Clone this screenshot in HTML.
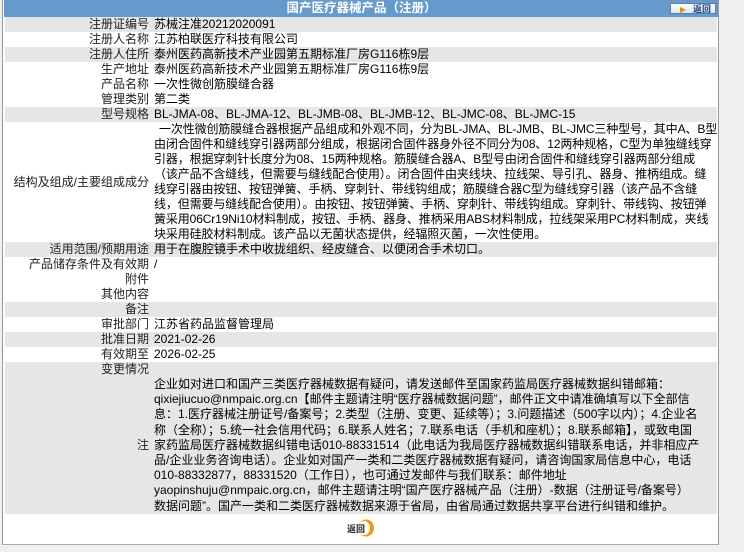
<!DOCTYPE html>
<html><head><meta charset="utf-8">
<style>
html,body{margin:0;padding:0;}
body{width:744px;height:552px;background:#f0f0f0;position:relative;overflow:hidden;font-family:"Liberation Sans","Noto Sans CJK SC",sans-serif;font-size:12px;color:#000;}
#box{position:absolute;left:2px;top:0;width:717px;height:545px;background:#fff;border-left:1px solid #999;border-right:1px solid #999;border-bottom:1px solid #aaa;box-sizing:border-box;overflow:hidden;}
#hd{position:absolute;left:1px;top:0;width:715px;height:17px;background:#6699cc;color:#fff;font-weight:bold;font-size:12.5px;line-height:17px;text-align:center;}
#ret{position:absolute;left:667px;top:3px;width:46px;height:11px;background:linear-gradient(#fff,#dde6f0);border:1px solid #5a7fae;font-size:9px;line-height:11px;color:#1a3d7a;font-weight:bold;text-align:right;padding-right:4px;box-sizing:border-box;}
#ret:before{content:"";position:absolute;left:9px;top:3px;border-left:6px solid #f08a00;border-top:3px solid transparent;border-bottom:3px solid transparent;}
table{position:absolute;left:2px;top:17px;width:712px;border-collapse:collapse;table-layout:fixed;}
td{padding:0;line-height:15px;height:15px;vertical-align:middle;white-space:nowrap;overflow:hidden;}
td.l{width:144px;text-align:right;padding-right:5px;color:#222;}
tr.g td{background:#e6e6e6;}
.s{letter-spacing:-0.12px;}
#btn{position:absolute;left:343px;top:519px;width:30px;height:18px;}
</style></head><body>
<div id="box">
<div id="hd">国产医疗器械产品（注册）</div>
<div id="ret">返回</div>
<table>
<tr class="g"><td class="l">注册证编号</td><td>苏械注准20212020091</td></tr>
<tr><td class="l">注册人名称</td><td>江苏柏联医疗科技有限公司</td></tr>
<tr class="g"><td class="l">注册人住所</td><td>泰州医药高新技术产业园第五期标准厂房G116栋9层</td></tr>
<tr><td class="l">生产地址</td><td>泰州医药高新技术产业园第五期标准厂房G116栋9层</td></tr>
<tr><td class="l">产品名称</td><td>一次性微创筋膜缝合器</td></tr>
<tr><td class="l">管理类别</td><td>第二类</td></tr>
<tr class="g"><td class="l">型号规格</td><td>BL-JMA-08、BL-JMA-12、BL-JMB-08、BL-JMB-12、BL-JMC-08、BL-JMC-15</td></tr>
<tr><td class="l">结构及组成/主要组成成分</td><td class="s"><span style="padding-left:5px"></span>一次性微创筋膜缝合器根据产品组成和外观不同，分为BL-JMA、BL-JMB、BL-JMC三种型号，其中A、B型<br>由闭合固件和缝线穿引器两部分组成，根据闭合固件器身外径不同分为08、12两种规格，C型为单独缝线穿<br>引器，根据穿刺针长度分为08、15两种规格。筋膜缝合器A、B型号由闭合固件和缝线穿引器两部分组成<br>（该产品不含缝线，但需要与缝线配合使用）。闭合固件由夹线块、拉线架、导引孔、器身、推柄组成。缝<br>线穿引器由按钮、按钮弹簧、手柄、穿刺针、带线钩组成；筋膜缝合器C型为缝线穿引器（该产品不含缝<br>线，但需要与缝线配合使用）。由按钮、按钮弹簧、手柄、穿刺针、带线钩组成。穿刺针、带线钩、按钮弹<br>簧采用06Cr19Ni10材料制成，按钮、手柄、器身、推柄采用ABS材料制成，拉线架采用PC材料制成，夹线<br>块采用硅胶材料制成。该产品以无菌状态提供，经辐照灭菌，一次性使用。</td></tr>
<tr class="g"><td class="l">适用范围/预期用途</td><td>用于在腹腔镜手术中收拢组织、经皮缝合、以便闭合手术切口。</td></tr>
<tr><td class="l">产品储存条件及有效期</td><td>/</td></tr>
<tr><td class="l">附件</td><td></td></tr>
<tr><td class="l">其他内容</td><td></td></tr>
<tr class="g"><td class="l">备注</td><td></td></tr>
<tr><td class="l">审批部门</td><td>江苏省药品监督管理局</td></tr>
<tr class="g"><td class="l">批准日期</td><td>2021-02-26</td></tr>
<tr><td class="l">有效期至</td><td>2026-02-25</td></tr>
<tr class="g"><td class="l">变更情况</td><td></td></tr>
<tr class="g"><td class="l">注</td><td style="line-height:15.2px">企业如对进口和国产三类医疗器械数据有疑问，请发送邮件至国家药监局医疗器械数据纠错邮箱：<br>qixiejiucuo@nmpaic.org.cn【邮件主题请注明“医疗器械数据问题”，邮件正文中请准确填写以下全部信<br>息：1.医疗器械注册证号/备案号；2.类型（注册、变更、延续等）；3.问题描述（500字以内）；4.企业名<br>称（全称）；5.统一社会信用代码；6.联系人姓名；7.联系电话（手机和座机）；8.联系邮箱】，或致电国<br>家药监局医疗器械数据纠错电话010-88331514（此电话为我局医疗器械数据纠错联系电话，并非相应产<br>品/企业业务咨询电话）。企业如对国产一类和二类医疗器械数据有疑问，请咨询国家局信息中心，电话<br>010-88332877，88331520（工作日），也可通过发邮件与我们联系：邮件地址<br>yaopinshuju@nmpaic.org.cn，邮件主题请注明“国产医疗器械产品（注册）-数据（注册证号/备案号）<br>数据问题”。国产一类和二类医疗器械数据来源于省局，由省局通过数据共享平台进行纠错和维护。</td></tr>
</table>
<svg id="btn" viewBox="0 0 30 18"><ellipse cx="20" cy="9" rx="8" ry="8.5" fill="#f0960a"/><ellipse cx="18" cy="9" rx="6" ry="7" fill="#fff"/><text x="1" y="13" font-size="9" font-weight="bold" font-family="Noto Sans CJK SC,sans-serif" fill="#222">返回</text></svg>
</div>
</body></html>
